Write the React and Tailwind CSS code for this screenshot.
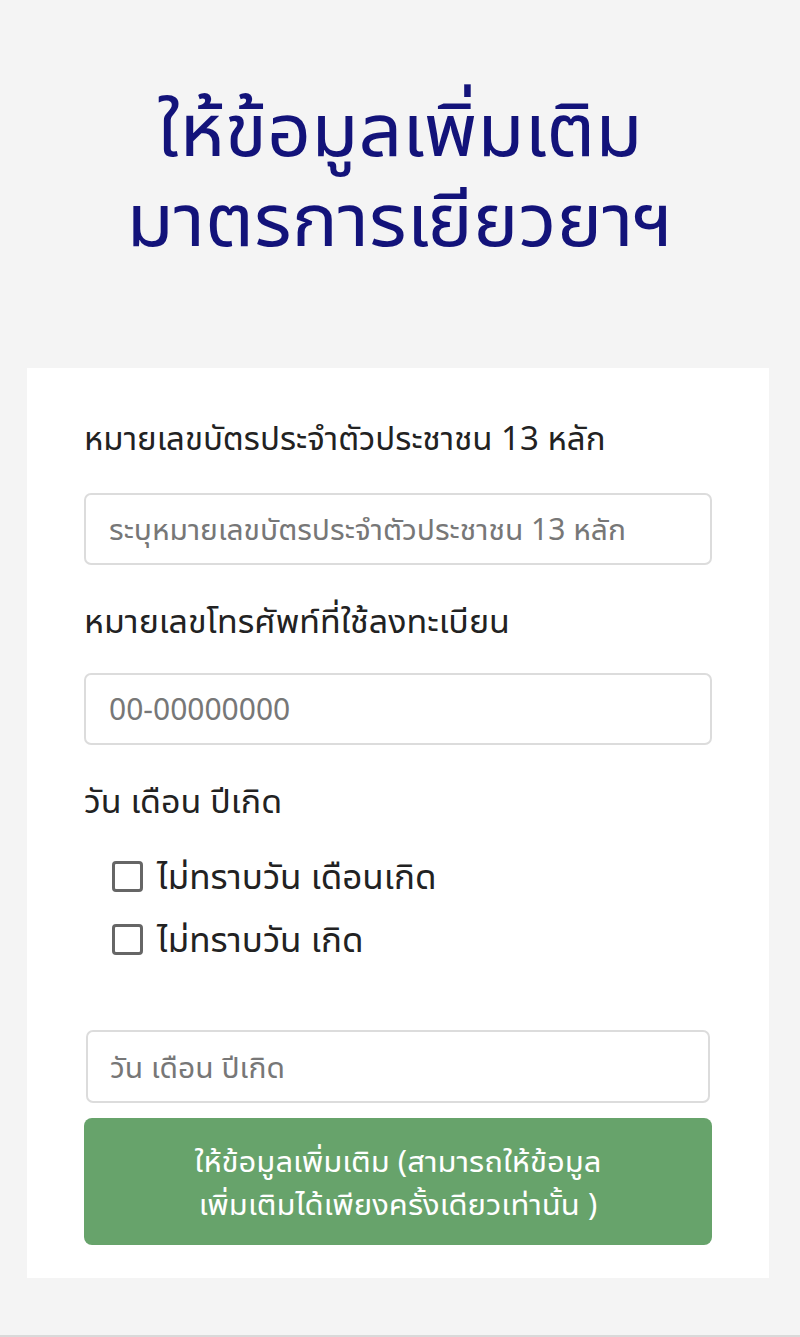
export default function App() {
  const font = { fontFamily: '"Noto Sans Thai UI", "Noto Sans Thai", "Noto Sans", "DejaVu Sans", sans-serif' };
  return (
    <div className="w-[800px] h-[1337px] bg-[#f4f4f4] flex flex-col border-b-2 border-[#d9d9d9]" style={font}>
      <div className="pt-[82px] h-[368px] flex flex-col items-center">
        <h1 className="text-[77px] leading-[90px] text-[#13137a] text-center">
          ให้ข้อมูลเพิ่มเติม
          <br />
          มาตรการเยียวยาฯ
        </h1>
      </div>
      <div className="mx-[27px] w-[742px] h-[910px] bg-white px-[57px] pt-[50px] flex flex-col">
        <label className="text-[33px] leading-[40px] text-[#222]">หมายเลขบัตรประจำตัวประชาชน 13 หลัก</label>
        <div className="mt-[35px] h-[72px] w-[628px] border-2 border-[#dcdcdc] rounded-[7px] flex items-center px-[23px] text-[30px] leading-[40px] text-[#777]">
          ระบุหมายเลขบัตรประจำตัวประชาชน 13 หลัก
        </div>
        <label className="mt-[35px] text-[34px] leading-[40px] text-[#222]">หมายเลขโทรศัพท์ที่ใช้ลงทะเบียน</label>
        <div className="mt-[33px] h-[72px] w-[628px] border-2 border-[#dcdcdc] rounded-[7px] flex items-center px-[23px] text-[30px] leading-[40px] text-[#777]">
          00-00000000
        </div>
        <label className="mt-[35px] text-[34px] leading-[40px] text-[#222]">วัน เดือน ปีเกิด</label>
        <div className="mt-[36px] pl-[28px] flex flex-col gap-[23px]">
          <div className="flex items-center gap-[14px] h-[40px]">
            <span className="w-[31px] h-[31px] border-[3px] border-[#666] rounded-[4px] bg-white shrink-0"></span>
            <span className="text-[35px] leading-[40px] text-[#222]">ไม่ทราบวัน เดือนเกิด</span>
          </div>
          <div className="flex items-center gap-[14px] h-[40px]">
            <span className="w-[31px] h-[31px] border-[3px] border-[#666] rounded-[4px] bg-white shrink-0"></span>
            <span className="text-[35px] leading-[40px] text-[#222]">ไม่ทราบวัน เกิด</span>
          </div>
        </div>
        <div className="mt-[71px] ml-[2px] h-[73px] w-[624px] border-2 border-[#dcdcdc] rounded-[7px] flex items-center px-[22px] text-[30px] leading-[40px] text-[#777]">
          วัน เดือน ปีเกิด
        </div>
        <div className="mt-[15px] h-[127px] w-[628px] bg-[#67a36b] rounded-[8px] flex flex-col items-center justify-center text-white text-[31px] leading-[43px]">
          <div>ให้ข้อมูลเพิ่มเติม (สามารถให้ข้อมูล</div>
          <div>เพิ่มเติมได้เพียงครั้งเดียวเท่านั้น )</div>
        </div>
      </div>
    </div>
  );
}
